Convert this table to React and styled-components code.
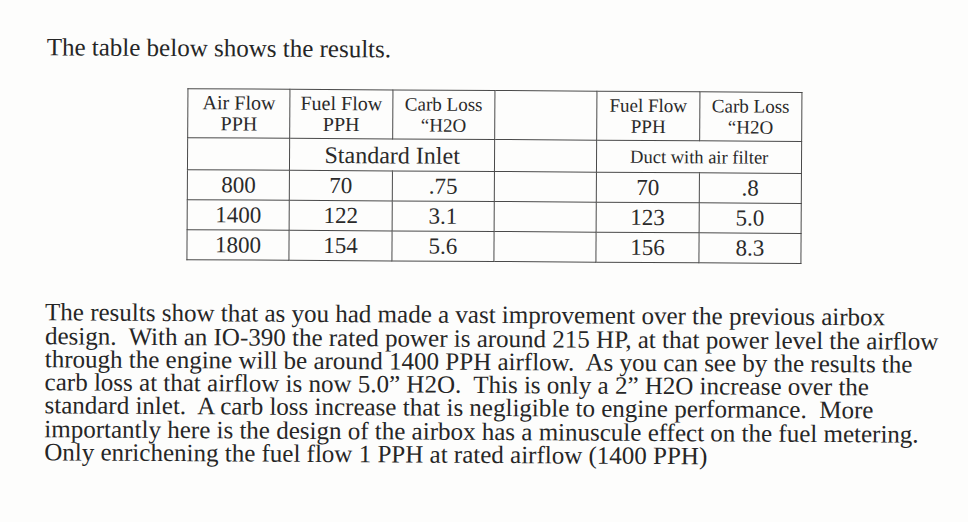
import React from 'react';
import styled, { createGlobalStyle } from 'styled-components';

const GlobalStyle = createGlobalStyle`
  html, body {
    margin: 0;
    padding: 0;
    background: #fdfdfc;
  }
`;

const Page = styled.div`
  width: 968px;
  height: 522px;
  box-sizing: border-box;
  padding: 35px 0 0 47px;
  font-family: "Liberation Serif", "Times New Roman", serif;
  color: #262626;
  overflow: hidden;
  transform: rotate(0.35deg);
  transform-origin: 0 0;
`;

const Title = styled.p`
  margin: 0;
  font-size: 25px;
  line-height: 23.3px;
`;

const ResultsTable = styled.table`
  margin: 29px 0 0 141px;
  border-collapse: collapse;
  table-layout: fixed;
  width: 615px;
  font-family: "Liberation Serif", "Times New Roman", serif;
  color: #2a2a2a;
`;

const Cell = styled.td`
  width: 102px;
  padding: 0;
  box-sizing: border-box;
  border: 1px solid #4a4a4a;
  text-align: center;
  font-size: ${(p) => p.$size || 23}px;
  line-height: ${(p) => (p.$top ? '21px' : '22px')};
  height: ${(p) => p.$h || 30}px;
  vertical-align: ${(p) => (p.$top ? 'top' : 'middle')};
  padding-top: ${(p) => (p.$top ? '3px' : '0')};
`;

const Body = styled.div`
  margin-top: 41px;
  font-size: 25px;
  line-height: 23.3px;
  white-space: pre;
`;

const Line = styled.div``;

const rows = [
  ['800', '70', '.75', '70', '.8'],
  ['1400', '122', '3.1', '123', '5.0'],
  ['1800', '154', '5.6', '156', '8.3'],
];

const lines = [
  'The results show that as you had made a vast improvement over the previous airbox',
  'design.  With an IO-390 the rated power is around 215 HP, at that power level the airflow',
  'through the engine will be around 1400 PPH airflow.  As you can see by the results the',
  'carb loss at that airflow is now 5.0\u201d H2O.  This is only a 2\u201d H2O increase over the',
  'standard inlet.  A carb loss increase that is negligible to engine performance.  More',
  'importantly here is the design of the airbox has a minuscule effect on the fuel metering.',
  'Only enrichening the fuel flow 1 PPH at rated airflow (1400 PPH)',
];

function App() {
  return (
    <>
      <GlobalStyle />
      <Page>
        <Title>The table below shows the results.</Title>

        <ResultsTable>
          <tbody>
            <tr>
              <Cell $size={20} $top $h={49}>Air Flow<br />PPH</Cell>
              <Cell $size={20} $top $h={49}>Fuel Flow<br />PPH</Cell>
              <Cell $size={19} $top $h={49}>Carb Loss<br />{'\u201cH2O'}</Cell>
              <Cell $size={19} $top $h={49} />
              <Cell $size={19} $top $h={49}>Fuel Flow<br />PPH</Cell>
              <Cell $size={19} $top $h={49}>Carb Loss<br />{'\u201cH2O'}</Cell>
            </tr>
            <tr>
              <Cell $h={32} />
              <Cell $size={24} $h={32} colSpan={2}>Standard Inlet</Cell>
              <Cell $h={32} />
              <Cell $size={18.5} $h={32} colSpan={2}>Duct with air filter</Cell>
            </tr>
            {rows.map((r) => (
              <tr key={r[0]}>
                <Cell>{r[0]}</Cell>
                <Cell>{r[1]}</Cell>
                <Cell>{r[2]}</Cell>
                <Cell />
                <Cell>{r[3]}</Cell>
                <Cell>{r[4]}</Cell>
              </tr>
            ))}
          </tbody>
        </ResultsTable>

        <Body>
          {lines.map((l) => (
            <Line key={l}>{l}</Line>
          ))}
        </Body>
      </Page>
    </>
  );
}

export default App;
